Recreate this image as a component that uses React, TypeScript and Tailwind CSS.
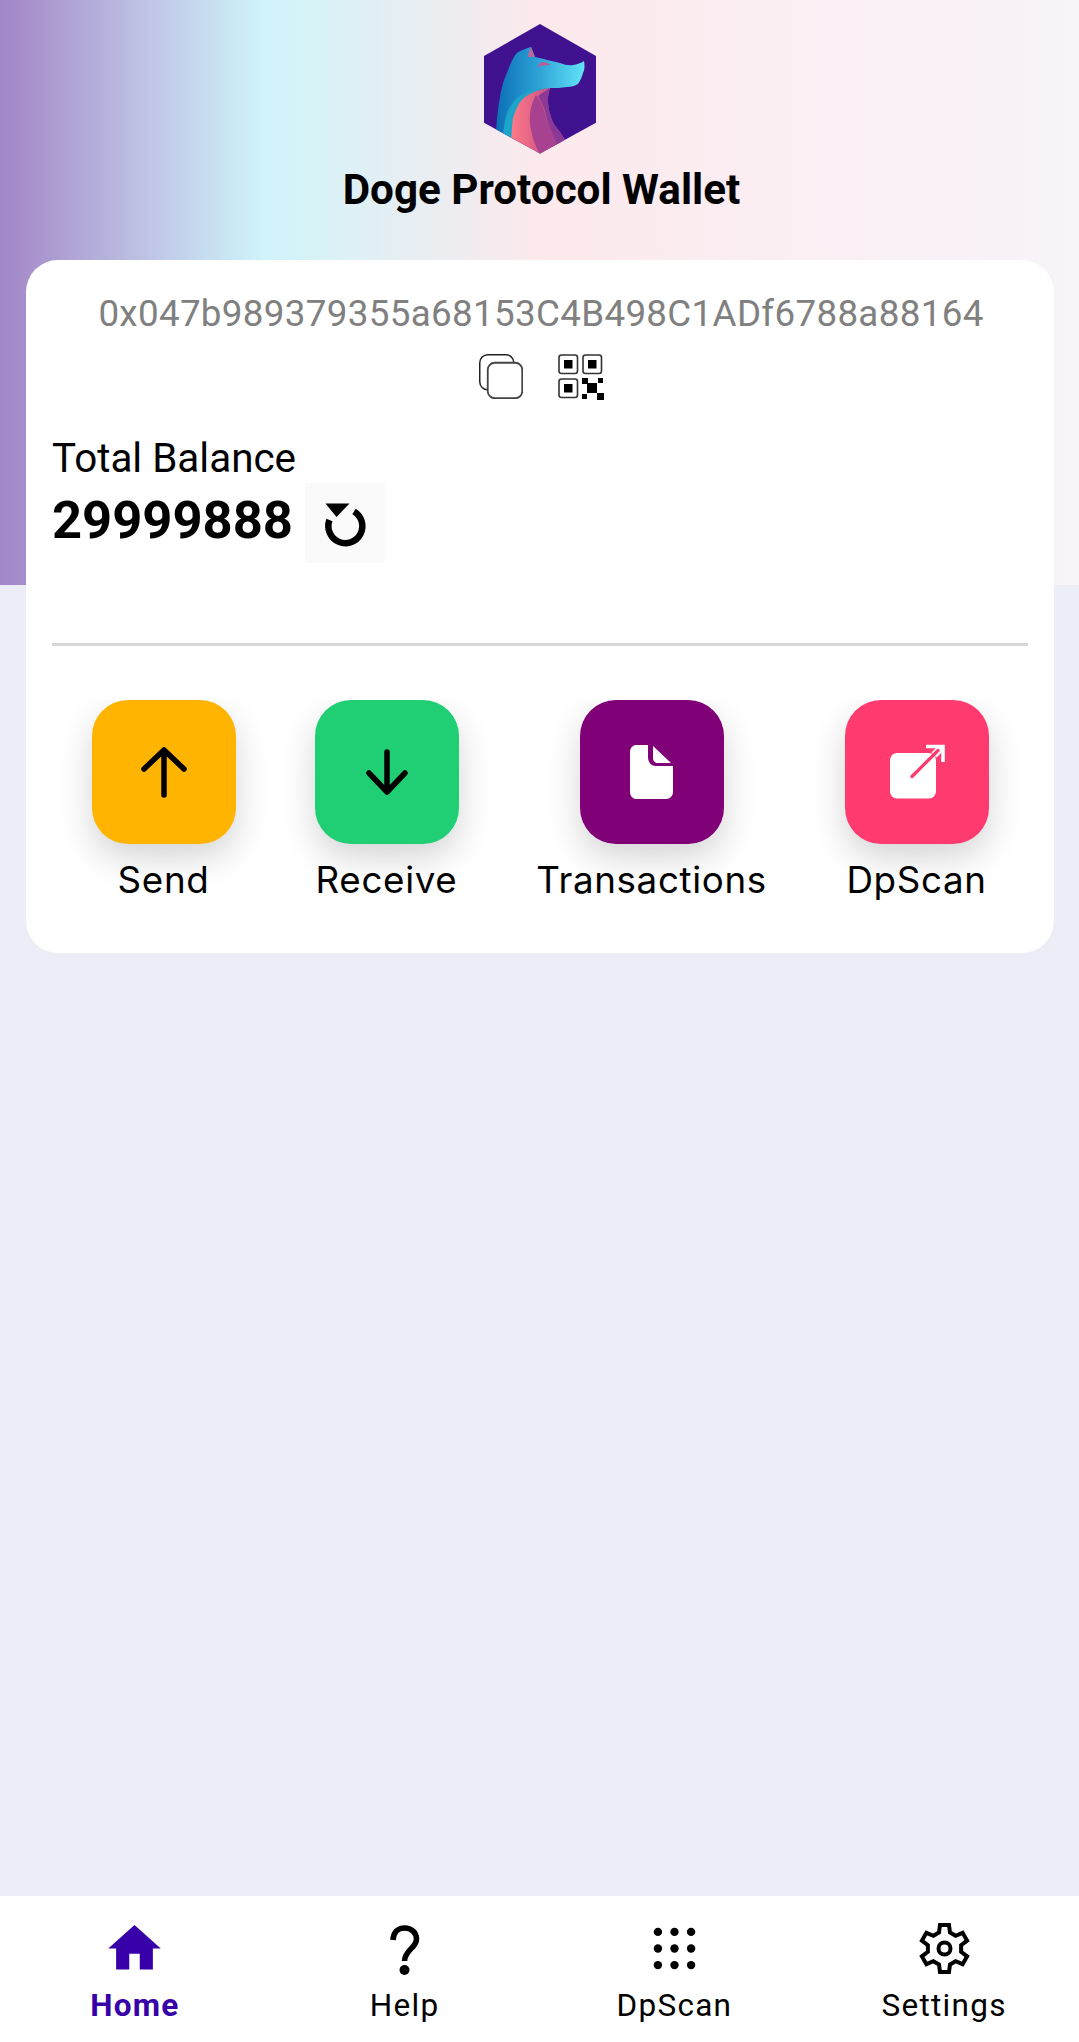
import { MdHome } from "react-icons/md";

const roboto = "font-['Roboto',sans-serif]";

function Logo() {
  const hex = "M56 0L112 32V98.7L56 129.5L0 98.7V32Z";
  return (
    <svg width="112" height="130" viewBox="0 0 112 130" className="block">
      <defs>
        <clipPath id="hexClip"><path d={hex} /></clipPath>
        <linearGradient id="blue" x1="0" y1="0" x2="1" y2="0">
          <stop offset="0" stopColor="#0d6fb5" />
          <stop offset="0.45" stopColor="#2a9fd4" />
          <stop offset="1" stopColor="#62e3f7" />
        </linearGradient>
        <linearGradient id="coral" x1="0" y1="0" x2="1" y2="0">
          <stop offset="0" stopColor="#ff7a85" />
          <stop offset="0.55" stopColor="#d75a88" />
          <stop offset="1" stopColor="#b0458f" />
        </linearGradient>
      </defs>
      <path d={hex} fill="#41128f" />
      <g clipPath="url(#hexClip)">
        <path d="M12 112C12.5 96 14 84 16 73C18 62 20 55 23 49C26 41 29 33 33 29C37 26 41 25 47 23L51 33C56 34 60 35 63 36C68 37 72 38 76 39C81 41 85 41.5 89 41C93 40.5 97 39 100 37C101 42 100.5 46 99 49C98 53 96 57 94 60C91 62 87 63 83 63C77 64 72 64 66 64L30 116Z" fill="url(#blue)" />
        <path d="M47 23L51 33L44 33C44 29 45.5 26 47 23Z" fill="#b9699a" />
        <path d="M53 43C55 40 57 38 59 38C62 38 65 39.5 67 41C63 41 58 41.5 53 43Z" fill="#b9609a" />
        <path d="M19 110C20 102 21 95 23 89C25 84 28 80 31 76C36 71 42 68 48 66C54 65 60 64 66 64L40 84L30 118Z" fill="#1fa4c9" />
        <path d="M27 116C28 108 28 100 29 94C31 88 33 83 36 78C39 74 43 71 48 69C54 66 60 65 66 64C64.5 69 63.5 74 64 79C64.5 85 66 91 68 96C70 101 73 104 76 108L81 116L60 134H36Z" fill="url(#coral)" />
        <path d="M52 71C48 78 45 88 46 99C47 110 51 121 56 131L74 120C71 112 68 106 66 103C63 97 61 90 59 83C57 78 55 74 52 71Z" fill="#a8418f" />
        <path d="M54 72C57 70 61 67 66 64C64.5 69 63.5 74 64 79C64.5 85 66 91 68 96C70 101 73 104 76 108L81 116L73 121C71 114 68 108 66 103C63 97 62 91 60 84C58 79 56 75 54 72Z" fill="#8a3a96" />
      </g>
    </svg>
  );
}

function CopyIcon() {
  return (
    <svg width="44" height="45" viewBox="0 0 44 45" fill="none" className="block">
      <rect x="0.75" y="0.75" width="34" height="35" rx="8" stroke="#222" strokeWidth="1.5" />
      <rect x="8.75" y="8.75" width="34.5" height="35.5" rx="7" fill="#fff" stroke="#444" strokeWidth="1.8" />
    </svg>
  );
}

function QrIcon() {
  return (
    <svg width="46" height="46" viewBox="0 0 46 46" fill="none" className="block">
      <rect x="1" y="1" width="18.5" height="18.5" rx="2.5" stroke="#333" strokeWidth="1.6" />
      <rect x="6" y="6" width="8.5" height="8.5" fill="#000" />
      <rect x="25" y="1" width="18.5" height="18.5" rx="2.5" stroke="#333" strokeWidth="1.6" />
      <rect x="30" y="6" width="8.5" height="8.5" fill="#000" />
      <rect x="1" y="25" width="18.5" height="18.5" rx="2.5" stroke="#333" strokeWidth="1.6" />
      <rect x="6" y="30" width="8.5" height="8.5" fill="#000" />
      <rect x="24" y="24" width="6" height="6" fill="#000" />
      <rect x="40" y="24" width="5" height="5" fill="#000" />
      <rect x="29" y="29" width="10" height="10" fill="#000" />
      <rect x="24" y="40" width="5" height="5" fill="#000" />
      <rect x="39" y="39" width="7" height="7" fill="#000" />
    </svg>
  );
}

function RefreshIcon() {
  return (
    <svg width="80" height="80" viewBox="0 0 80 80" fill="none" className="block">
      <path d="M49 28.5A17 17 0 1 1 24.5 37" stroke="#000" strokeWidth="6.5" />
      <path d="M20.5 20.5H44.5L31.5 34Z" fill="#000" />
    </svg>
  );
}

function ArrowUp() {
  return (
    <svg width="60" height="60" viewBox="0 0 60 60" fill="none" stroke="#000" strokeWidth="5.5" strokeLinecap="round" strokeLinejoin="round">
      <path d="M30 53V9M10 27L30 8L50 27" />
    </svg>
  );
}

function ArrowDown() {
  return (
    <svg width="60" height="60" viewBox="0 0 60 60" fill="none" stroke="#000" strokeWidth="5.5" strokeLinecap="round" strokeLinejoin="round">
      <path d="M30 10V50M12 31L30 50L48 31" />
    </svg>
  );
}

function FileIcon() {
  return (
    <svg width="60" height="60" viewBox="0 0 60 60" fill="#fff">
      <path d="M14 3H26V15C26 20 29 24 34 24H51V50C51 54 48 57 44 57H14C11 57 8 54 8 50V10C8 6 11 3 14 3Z" />
      <path d="M31 4L49 21H36C33 21 31 19 31 16Z" />
    </svg>
  );
}

function ExternalIcon() {
  return (
    <svg width="60" height="60" viewBox="0 0 60 60" fill="none">
      <rect x="3" y="11" width="46" height="45.5" rx="7" fill="#fff" />
      <path d="M47 13L54 6" stroke="#fff" strokeWidth="7" />
      <path d="M39 4.5H56V20" stroke="#fff" strokeWidth="3.6" />
      <path d="M25 34.5L51 8.5" stroke="#fe3a6e" strokeWidth="3.2" strokeLinecap="round" />
    </svg>
  );
}

function AppsIcon() {
  const p = [14.9, 31.5, 48.1];
  return (
    <svg width="63" height="63" viewBox="0 0 63 63" fill="#000">
      {p.map((y) => p.map((x) => <circle key={`${x}-${y}`} cx={x} cy={y} r="4.2" />))}
    </svg>
  );
}

function HelpIcon() {
  return (
    <svg width="63" height="63" viewBox="0 0 63 63" fill="none">
      <path d="M20 23C20.5 15 25 11 31.5 11C38.5 11 43.5 15.5 43.5 22C43.5 31 32 32.5 31.5 44" stroke="#000" strokeWidth="5.6" />
      <circle cx="31.5" cy="53" r="5" fill="#000" />
    </svg>
  );
}

function GearIcon() {
  const base: [number, number][] = [[-5.5, -16], [-4.5, -23.5], [4.5, -23.5], [5.5, -16]];
  const pts: string[] = [];
  for (let i = 0; i < 6; i++) {
    const a = (i * Math.PI) / 3;
    for (const [x, y] of base) {
      pts.push(`${(31.5 + x * Math.cos(a) - y * Math.sin(a)).toFixed(2)},${(31.5 + x * Math.sin(a) + y * Math.cos(a)).toFixed(2)}`);
    }
  }
  return (
    <svg width="63" height="63" viewBox="0 0 63 63" fill="none" stroke="#000" strokeWidth="4">
      <polygon points={pts.join(" ")} />
      <circle cx="31.5" cy="31.5" r="6" />
    </svg>
  );
}

function Action({ label, color, wide, children }: { label: string; color: string; wide?: boolean; children: React.ReactNode }) {
  return (
    <div className={`flex flex-col items-center ${wide ? "w-[228px]" : "w-[144px]"}`}>
      <div className={`flex h-[144px] w-[144px] items-center justify-center rounded-[36px] shadow-[0_14px_34px_rgba(0,0,0,0.17)] [clip-path:inset(0_-70px_-70px_-70px)] ${color}`}>
        {children}
      </div>
      <span className="mt-[12px] whitespace-nowrap font-['Inter',sans-serif] text-[36.75px] leading-[48px] tracking-[0.65px] text-black">{label}</span>
    </div>
  );
}

function NavItem({ label, active, children }: { label: string; active?: boolean; children: React.ReactNode }) {
  return (
    <div className="flex flex-1 flex-col items-center">
      <div className="h-[63px]">{children}</div>
      <span className={`${roboto} mt-[6px] text-[31.5px] leading-[40px] ${active ? "font-bold tracking-[1.2px] text-[#3700a8]" : "tracking-[1.3px] text-black"}`}>{label}</span>
    </div>
  );
}

export default function App() {
  return (
    <div className={`flex h-[2042px] w-[1079px] flex-col overflow-hidden bg-[#ecedf6] ${roboto}`}>
      <div className="flex-1">
        <header className="flex h-[585px] flex-col items-center bg-[linear-gradient(90deg,#a285c6_0%,#bfc6e6_14%,#cff4fa_24.5%,#fce9ec_50%,#f8f4fa_100%)] pt-[24px]">
          <Logo />
          <h1 className="mt-[11px] pl-[4px] text-[42.2px] font-bold leading-[50px] text-black">Doge Protocol Wallet</h1>
        </header>
        <section className="mx-[26px] -mt-[325px] mr-[25px] h-[693px] rounded-[32px] bg-white px-[26px] pt-[29px]">
          <p className="pl-[2px] text-center text-[36.75px] leading-[50px] tracking-[0.33px] text-[#808080]">0x047b989379355a68153C4B498C1ADf6788a88164</p>
          <div className="mt-[15px] flex items-start justify-center gap-[35px] pl-[2px]">
            <CopyIcon />
            <QrIcon />
          </div>
          <p className="mt-[35px] text-[40.4px] leading-[48px] text-black">Total Balance</p>
          <div className="-mt-[3px] flex items-center">
            <span className="mb-[5px] text-[52.5px] font-bold leading-[80px] text-black">29999888</span>
            <button className="ml-[12px] h-[80px] w-[80px] bg-[#fafafa]"><RefreshIcon /></button>
          </div>
          <div className="mt-[78px] h-[3px] bg-[#d6d6d6]" />
          <div className="mt-[54px] flex justify-around">
            <Action label="Send" color="bg-[#feb401]"><ArrowUp /></Action>
            <Action label="Receive" color="bg-[#20cf74]"><ArrowDown /></Action>
            <Action label="Transactions" color="bg-[#800078]" wide><FileIcon /></Action>
            <Action label="DpScan" color="bg-[#fe3a6e]"><ExternalIcon /></Action>
          </div>
        </section>
      </div>
      <nav className="flex h-[146px] bg-white pt-[21px]">
        <NavItem label="Home" active><MdHome size={63} color="#3700a8" /></NavItem>
        <NavItem label="Help"><HelpIcon /></NavItem>
        <NavItem label="DpScan"><AppsIcon /></NavItem>
        <NavItem label="Settings"><GearIcon /></NavItem>
      </nav>
    </div>
  );
}
